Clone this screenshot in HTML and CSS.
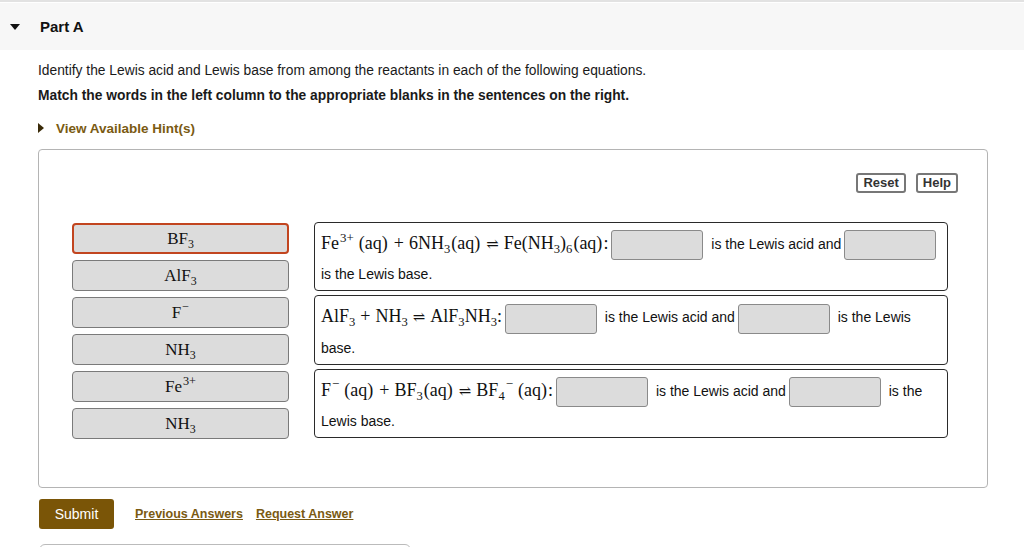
FILE: index.html
```html
<!DOCTYPE html>
<html lang="en">
<head>
<meta charset="utf-8">
<title>Part A</title>
<link rel="stylesheet" href="styles.css">
</head>
<body>
<div class="page">
  <div class="part-header">
    <span class="caret-down"></span>
    <span class="part-title">Part A</span>
  </div>
  <div class="content">
    <p class="intro">Identify the Lewis acid and Lewis base from among the reactants in each of the following equations.</p>
    <p class="instr">Match the words in the left column to the appropriate blanks in the sentences on the right.</p>
    <div class="hint"><span class="caret-right"></span><span class="hint-link">View Available Hint(s)</span></div>

    <div class="work">
      <div class="tools">
        <button class="tool-btn">Reset</button>
        <button class="tool-btn">Help</button>
      </div>
      <div class="match">
        <div class="choices">
          <div class="chip selected"><span class="m">BF<sub>3</sub></span></div>
          <div class="chip"><span class="m">AlF<sub>3</sub></span></div>
          <div class="chip"><span class="m">F<sup>−</sup></span></div>
          <div class="chip"><span class="m">NH<sub>3</sub></span></div>
          <div class="chip"><span class="m">Fe<sup>3+</sup></span></div>
          <div class="chip"><span class="m">NH<sub>3</sub></span></div>
        </div>
        <div class="sentences">
          <div class="sentence"><span class="m">Fe<sup>3+</sup><span class="aq">(aq)</span><span class="op">+</span>6NH<sub>3</sub><span class="aq">(aq)</span><span class="op eq">⇌</span>Fe(NH<sub>3</sub>)<sub>6</sub><span class="aq">(aq)</span>:</span><span class="blank"></span> is the Lewis acid and<span class="blank b2"></span> is the Lewis base.</div>
          <div class="sentence"><span class="m">AlF<sub>3</sub><span class="op">+</span>NH<sub>3</sub><span class="op eq">⇌</span>AlF<sub>3</sub>NH<sub>3</sub>:</span><span class="blank"></span> is the Lewis acid and<span class="blank b2"></span> is the Lewis base.</div>
          <div class="sentence"><span class="m">F<sup>−</sup><span class="aq">(aq)</span><span class="op">+</span>BF<sub>3</sub><span class="aq">(aq)</span><span class="op eq">⇌</span>BF<sub>4</sub><sup>−</sup><span class="aq">(aq)</span>:</span><span class="blank"></span> is the Lewis acid and<span class="blank b2"></span> is the Lewis base.</div>
        </div>
      </div>
    </div>

    <div class="actions">
      <button class="submit">Submit</button>
      <span class="action-link">Previous Answers</span>
      <span class="action-link">Request Answer</span>
    </div>
    <div class="next-box"></div>
  </div>
</div>
</body>
</html>
```
FILE: styles.css
```css
html, body {
  margin: 0;
  padding: 0;
  background: #fff;
}
body {
  font-family: "Liberation Sans", Arial, sans-serif;
  color: #1a1a1a;
  font-size: 14px;
  overflow: hidden;
}
.page {
  border-top: 2px solid #e2e2e2;
  padding-top: 1px;
}
.part-header {
  height: 47px;
  background: #f7f7f7;
  display: flex;
  align-items: center;
}
.caret-down {
  width: 0;
  height: 0;
  margin-left: 10px;
  border-left: 5px solid transparent;
  border-right: 5px solid transparent;
  border-top: 6px solid #111;
}
.part-title {
  margin-left: 20px;
  font-weight: bold;
  font-size: 15px;
  color: #111;
}
.content {
  padding: 0 36px 0 38px;
}
.intro {
  margin: 12px 0 0;
  line-height: 18px;
  font-size: 13.8px;
}
.instr {
  margin: 7px 0 0;
  line-height: 18px;
  font-size: 13.8px;
  font-weight: bold;
}
.hint {
  margin-top: 14px;
  display: flex;
  align-items: center;
  height: 18px;
}
.caret-right {
  width: 0;
  height: 0;
  border-top: 5px solid transparent;
  border-bottom: 5px solid transparent;
  border-left: 6px solid #3a2a08;
}
.hint-link {
  margin-left: 12px;
  font-weight: bold;
  font-size: 13.5px;
  color: #7a5a12;
}
.work {
  margin-top: 12px;
  box-sizing: border-box;
  border: 1px solid #b4b4b4;
  border-radius: 4px;
  height: 339px;
  padding: 23px 29px 0 33px;
}
.tools {
  display: flex;
  justify-content: flex-end;
  gap: 10px;
}
.tool-btn {
  font-family: "Liberation Sans", Arial, sans-serif;
  font-weight: bold;
  font-size: 13px;
  color: #333;
  background: #fff;
  border: 2px solid #777;
  border-radius: 3px;
  height: 20px;
  padding: 0 5px;
  line-height: 16px;
}
.match {
  margin-top: 29px;
  display: flex;
  gap: 25px;
  padding-right: 10px;
}
.m {
  font-family: "Liberation Serif", "DejaVu Serif", serif;
  font-size: 18px;
}
.m sub {
  font-size: 0.7em;
  vertical-align: -0.3em;
  line-height: 0;
}
.m sup {
  font-size: 0.72em;
  vertical-align: 0.55em;
  line-height: 0;
  margin-left: 1px;
  margin-right: 4px;
}
.chip .m sup {
  margin-right: 0;
}
.aq {
  margin: 0 1px;
}
.op {
  margin: 0 5px;
}
.eq {
  font-family: "DejaVu Serif", serif;
  font-size: 15px;
}
.choices {
  width: 217px;
  flex: none;
  display: flex;
  flex-direction: column;
  gap: 6px;
  padding-top: 1px;
}
.chip {
  height: 31px;
  box-sizing: border-box;
  background: #dcdcdc;
  border: 1px solid #7a7a7a;
  border-radius: 4px;
  display: flex;
  align-items: center;
  justify-content: center;
  color: #111;
}
.chip .m {
  font-size: 17px;
}
.chip.selected {
  border: 2px solid #c2451f;
}
.sentences {
  flex: 1;
  display: flex;
  flex-direction: column;
  gap: 4px;
}
.sentence {
  border: 1px solid #2a2a2a;
  border-radius: 4px;
  padding: 6px 2px 2px 6px;
  line-height: 28px;
  font-size: 14px;
  color: #111;
}
.blank {
  display: inline-block;
  width: 90px;
  height: 28px;
  vertical-align: middle;
  background: #dcdcdc;
  border: 1px solid #8a8a8a;
  border-radius: 3px;
  margin: 0 4px 0 3px;
}
.blank.b2 {
  margin-left: 3px;
}
.actions {
  margin-top: 11px;
  display: flex;
  align-items: center;
  gap: 13px;
}
.submit {
  width: 75px;
  height: 30px;
  margin-left: 1px;
  background: #7a5507;
  color: #fff;
  font-family: "Liberation Sans", Arial, sans-serif;
  font-size: 14px;
  border: none;
  border-radius: 3px;
  margin-right: 8px;
}
.action-link {
  font-weight: bold;
  font-size: 12.5px;
  color: #7a5a12;
  text-decoration: underline;
}
.next-box {
  margin-top: 15px;
  margin-left: 1px;
  width: 370px;
  height: 20px;
  border: 1px solid #bbb;
  border-radius: 6px;
}
```
